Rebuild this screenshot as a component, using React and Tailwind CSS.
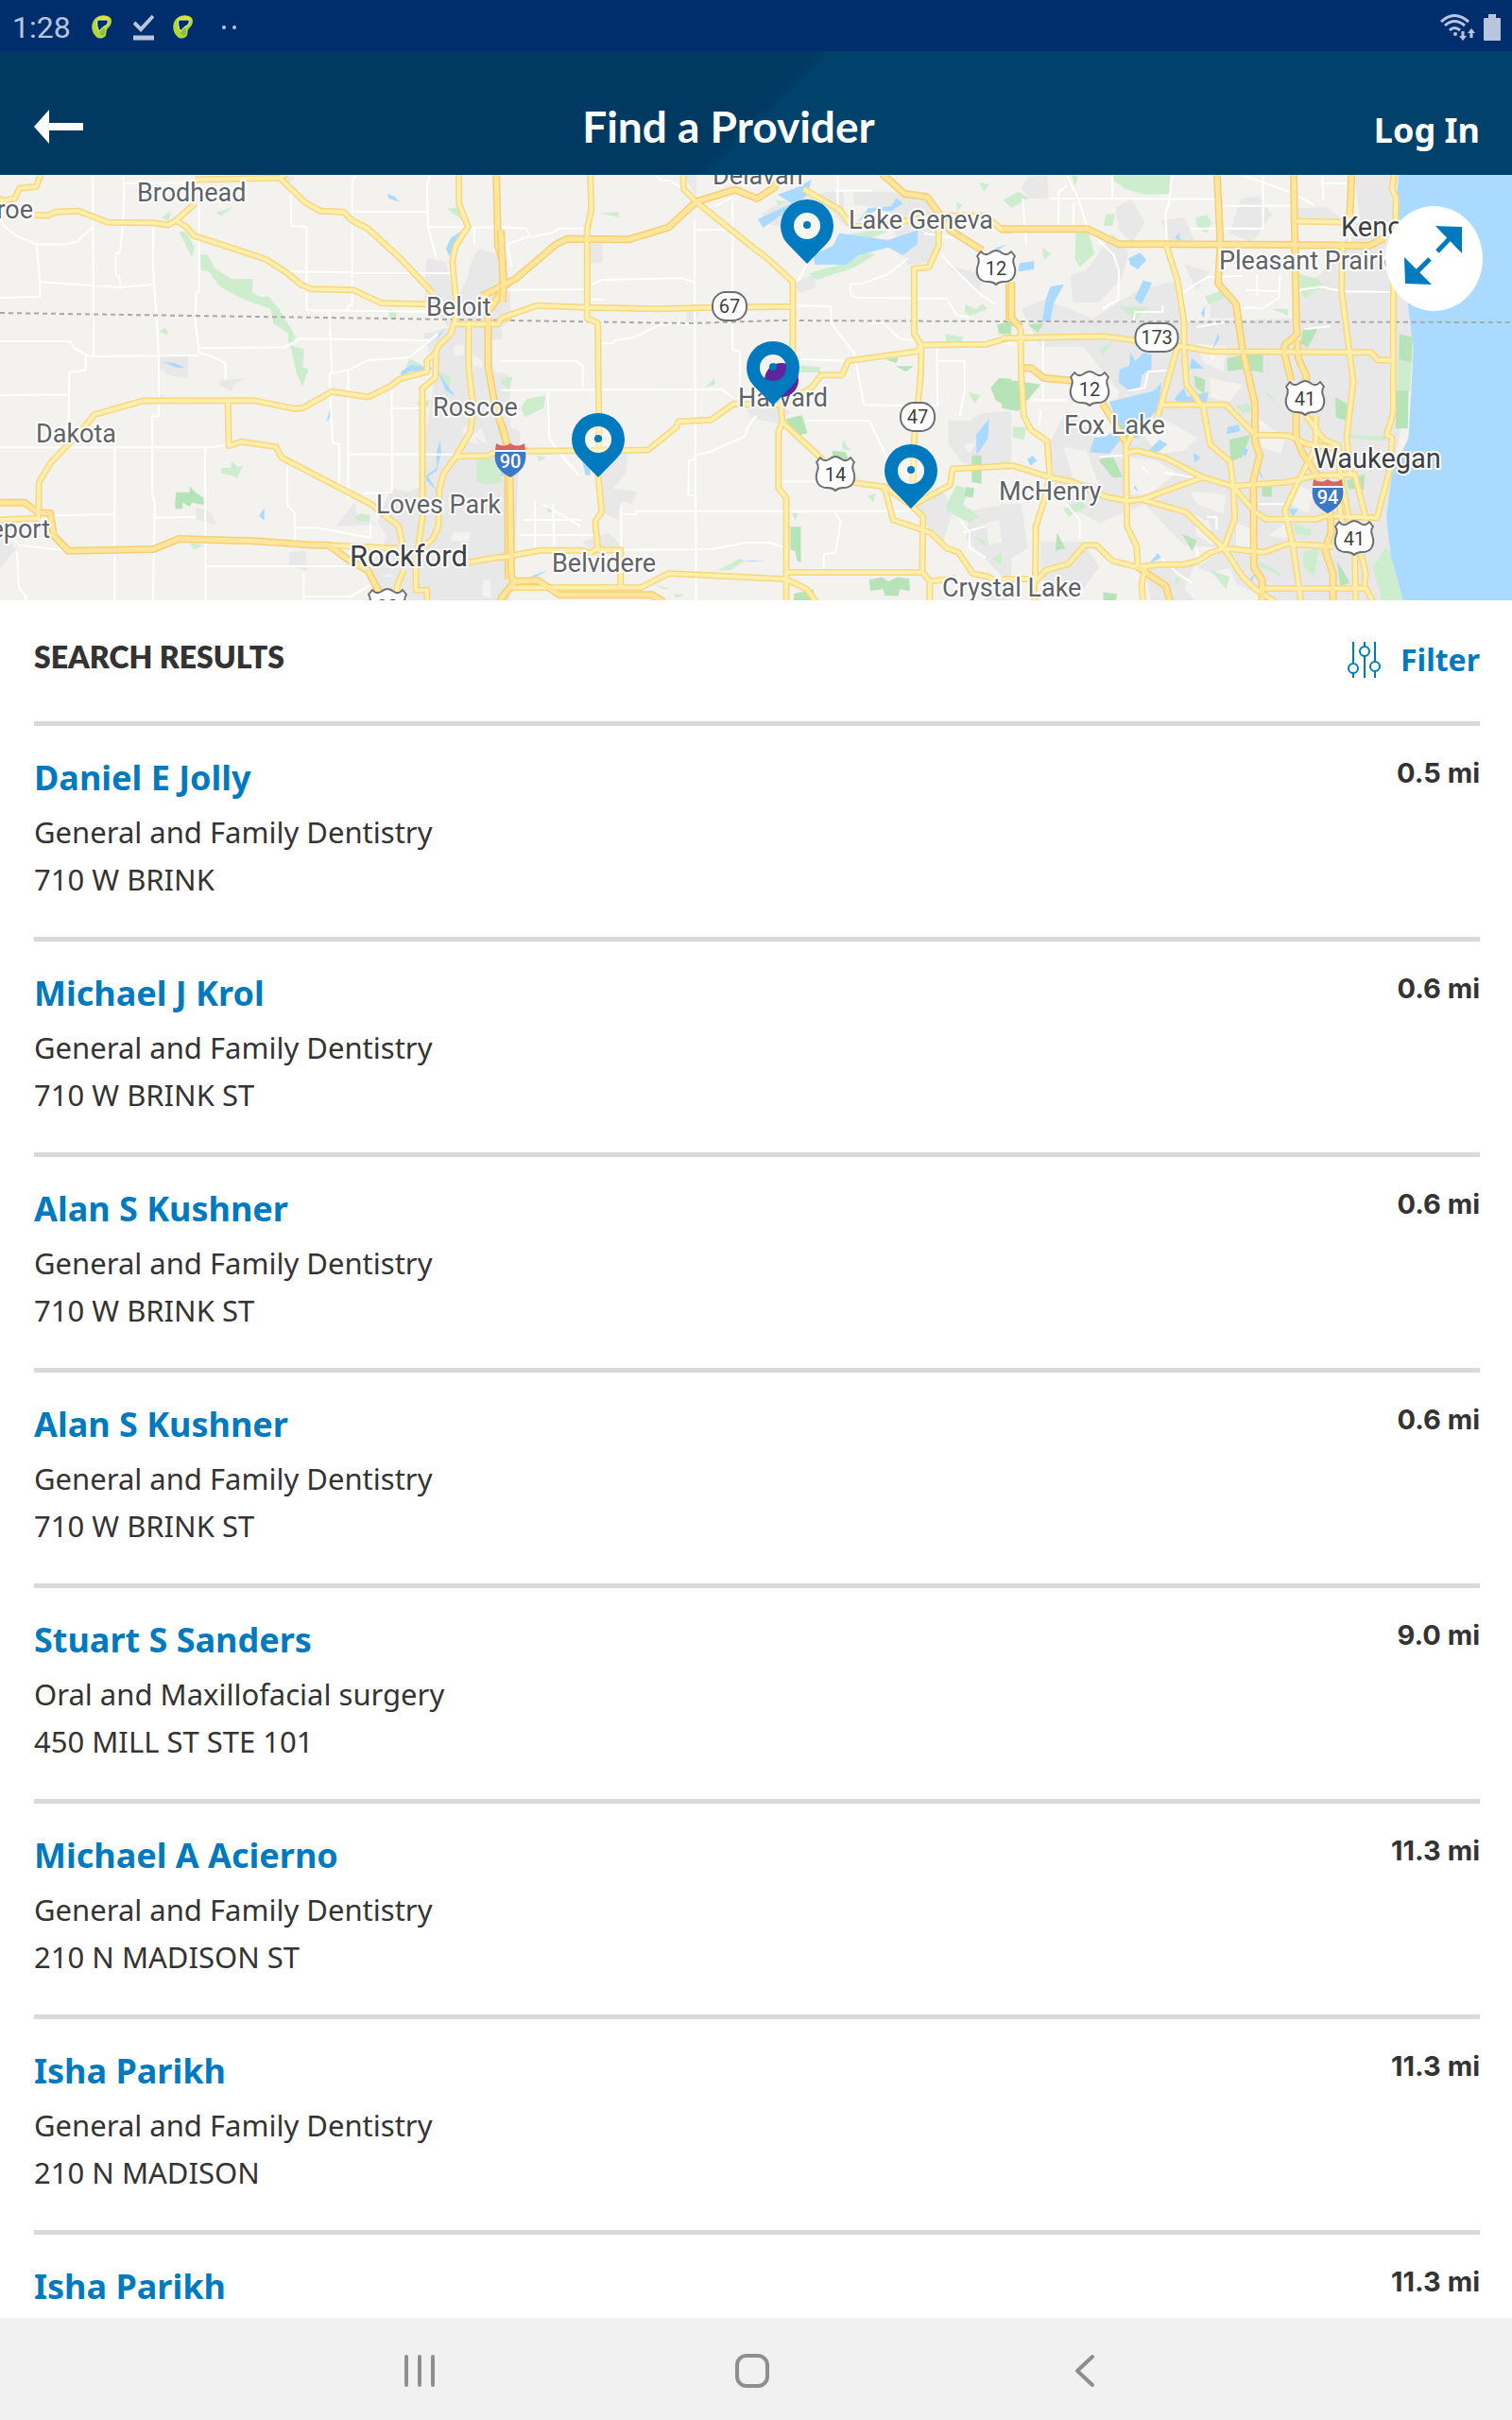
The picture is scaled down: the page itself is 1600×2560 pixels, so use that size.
import React from "react";

const providers = [
  { name: "Daniel E Jolly", specialty: "General and Family Dentistry", address: "710 W BRINK", distance: "0.5 mi" },
  { name: "Michael J Krol", specialty: "General and Family Dentistry", address: "710 W BRINK ST", distance: "0.6 mi" },
  { name: "Alan S Kushner", specialty: "General and Family Dentistry", address: "710 W BRINK ST", distance: "0.6 mi" },
  { name: "Alan S Kushner", specialty: "General and Family Dentistry", address: "710 W BRINK ST", distance: "0.6 mi" },
  { name: "Stuart S Sanders", specialty: "Oral and Maxillofacial surgery", address: "450 MILL ST STE 101", distance: "9.0 mi" },
  { name: "Michael A Acierno", specialty: "General and Family Dentistry", address: "210 N MADISON ST", distance: "11.3 mi" },
  { name: "Isha Parikh", specialty: "General and Family Dentistry", address: "210 N MADISON", distance: "11.3 mi" },
  { name: "Isha Parikh", specialty: "General and Family Dentistry", address: "210 N MADISON", distance: "11.3 mi" },
];

/* The map is drawn as three tiles, west to east, each in its own units. */
const tiles = [
  {
    transform: "translate(0 -5) scale(0.3444 0.3333)",
    urban:
      "M1310,280 L1370,290 L1400,420 L1440,330 L1440,310 L1470,250 L1540,270 L1568,350 L1568,480 L1540,500 L1568,700 L1568,1370 L1160,1370 L1140,1260 L1190,1160 L1160,1120 L1200,1010 L1260,1020 L1300,1000 L1310,820 L1340,640 L1300,520 L1380,500 L1305,410 Z M490,588 L578,588 L578,660 L530,655 L490,630 Z M675,668 L755,660 L720,680 L712,700 L675,685 Z M600,1070 L640,1080 L668,1125 L605,1110 Z M888,1212 L940,1208 L945,1272 L888,1255 Z M0,1110 L55,1100 L20,1170 L50,1200 L0,1265 Z M850,20 L905,20 L880,50 Z M1030,1130 L1090,1055 L1100,1100 L1160,1125 Z M480,712 L508,712 L505,724 L485,722 Z",
    patch:
      "M1420,830 L1440,800 L1470,870 L1440,860 Z M1480,820 L1495,870 L1450,840 Z M1395,560 L1425,555 L1425,585 L1395,590 Z M1450,585 L1480,600 L1485,625 L1455,620 Z M1510,540 L1568,535 L1568,650 L1515,640 Z M1390,1150 L1445,1150 L1440,1180 L1385,1175 Z M1485,1300 L1508,1300 L1508,1360 L1480,1350 Z M1170,1290 L1205,1280 L1205,1290 Z M1405,350 L1425,355 L1410,375 Z",
    park:
      "M550,195 L570,195 L598,245 L590,278 Z M616,268 L638,268 L660,312 L712,346 L776,345 L776,388 L800,402 L825,402 L860,444 L885,488 L908,528 L900,550 L884,545 L886,518 L840,487 L832,440 L775,420 L740,405 L675,370 L645,325 L616,315 Z M892,556 L935,568 L930,625 L948,632 L930,685 L912,650 Z M497,150 L527,128 L518,162 Z M663,135 L715,118 L678,145 Z M488,512 L510,500 L517,522 Z M1195,440 L1218,445 L1218,470 L1195,468 Z M1373,122 L1408,118 L1418,155 Z M680,945 L708,945 L712,923 L730,942 L747,938 L728,978 L710,968 L680,962 Z M583,1183 L628,1190 L595,1205 Z M1090,1100 L1110,1090 L1138,1095 L1135,1115 L1095,1112 Z M1464,918 L1520,915 L1550,990 L1500,997 L1464,990 Z M1535,670 L1568,655 L1568,700 Z M1258,598 L1300,620 L1240,650 Z M1345,640 L1385,655 L1380,690 Z M1275,740 L1320,730 L1315,752 Z",
    forest: "M540,1022 L583,1022 L583,1003 L600,1022 L626,1040 L626,1063 L590,1055 L582,1068 L562,1055 L560,1075 L538,1075 Z",
    water:
      "M1190,75 L1212,83 L1228,102 L1195,90 Z M502,608 L535,612 L568,627 L540,626 Z M1232,640 L1262,618 L1330,628 L1315,640 L1262,638 L1232,655 Z M1345,638 L1398,718 L1370,700 Z M1022,735 L1012,790 L1002,800 Z M1352,858 L1356,895 L1342,955 L1315,972 L1342,1018 L1310,985 L1310,968 L1342,945 L1340,900 Z M812,1072 L812,1112 L796,1097 Z M1415,195 L1395,240 L1382,275 L1370,250 L1385,215 Z M1370,498 L1338,545 L1350,518 Z",
    local:
      "M285,10 L288,590 M378,15 L380,42 L598,40 M382,42 L378,170 L368,262 L355,265 L357,335 L367,338 L370,370 M472,170 L470,300 L488,590 L488,780 L468,782 L468,1030 L476,1055 L470,1370 M612,10 L612,385 L603,390 L600,480 L612,580 L645,588 L692,612 L694,665 M0,155 L15,180 L50,208 L112,235 L200,236 L240,225 L285,180 M112,235 L123,355 L123,402 L0,405 M123,355 L370,372 L470,363 M0,543 L218,543 L225,562 L265,587 L290,591 L610,588 M265,587 L262,635 L213,642 L210,880 M0,714 L210,712 M0,880 L640,880 L700,872 M353,880 L352,1370 M630,880 L632,1370 M165,1096 L352,1092 M470,1103 L598,1100 M40,1170 L60,1190 L210,1208 M52,1210 L58,1325 L78,1350 L78,1370 M612,565 L875,562 L920,535 L1320,540 M893,70 L895,177 L942,180 L942,445 L1400,450 M890,322 L1400,328 M1095,15 L1082,35 L1082,430 L1070,430 L1070,445 M1082,132 L1312,132 M1320,15 L1312,50 L1315,180 L1340,275 M1315,180 L1568,182 M1457,180 L1457,235 M1012,450 L1020,640 L1012,650 L1022,865 L1042,870 L1042,1010 M1020,645 L1070,635 L1130,604 L1258,594 L1345,520 M1070,640 L1070,1045 M1070,902 L1400,902 M1204,690 L1204,1020 M1204,757 L1300,755 M1110,1025 L1205,1022 M883,935 L883,1062 L905,1090 L907,1180 M907,1135 L975,1135 L1140,1167 M632,1257 L1100,1257 M933,1280 L933,1370 M933,1353 L1080,1353 L1140,1315 M1138,1120 L1138,1165",
    road:
      "M130,0 L112,52 L60,58 L45,90 L10,98 L-5,90 M105,142 L145,145 L170,133 L242,130 L332,166 L470,167 L517,174 L540,160 L600,105 M540,160 L570,178 L596,208 L815,282 L880,325 L925,363 L955,377 L1085,380 L1172,422 L1310,425 M600,30 L860,25 L880,10 M860,25 L937,102 L985,130 L1055,133 L1085,162 L1130,185 L1230,280 L1330,390 M1410,10 L1410,105 L1438,180 L1400,240 L1390,290 L1400,400 L1400,470 L1385,520 L1345,560 L1340,580 L1312,605 L1312,640 L1230,662 L1200,685 L1132,720 L1020,703 L930,755 L905,757 L780,731 L440,732 L290,776 L255,820 L155,930 L120,990 L118,1105 M1340,570 L1338,658 L1298,693 L1298,1100 L1285,1200 M1240,1270 L1220,1320 L1220,1370 M1398,488 L1530,488 L1538,475 L1570,465 M1440,488 L1440,630 L1455,760 L1445,830 L1400,910 L1365,960 L1350,1010 L1347,1130 L1330,1170 L1270,1220 M1400,908 L1500,906 L1520,895 M700,735 L703,875 L740,862 L848,878 L865,912 L1140,1060 L1225,1130 L1245,1230 M1000,1190 L1220,1200 M0,1110 L118,1105 M1440,1245 L1568,1222 M1278,1240 L1278,1333 L1312,1333 L1312,1370",
    highway:
      "M1525,10 L1530,240 L1545,290 L1545,380 L1500,450 L1500,625 L1520,740 L1560,880 L1562,1300 M1480,400 L1568,355 M0,1055 L75,1055 L115,1085 L155,1090 L165,1160 L210,1208 L472,1203 L550,1170 L780,1177 L960,1190 L1010,1190 L1075,1240 L1130,1270 L1165,1340 M1535,1370 L1570,1320",
  },
  {
    transform: "translate(530 -5) scale(0.3444 0.3333)",
    urban:
      "M260,225 L312,232 L312,295 L260,295 Z M570,445 L608,445 L600,480 L570,480 Z M755,760 L860,745 L890,770 L850,805 L770,785 Z M290,910 L390,895 L385,960 L345,1010 L420,1020 L400,1060 L370,1050 L360,1110 L300,1080 Z M900,360 L960,330 L970,370 L920,390 Z M1085,65 L1210,70 L1300,90 L1340,150 L1330,290 L1250,300 L1180,120 L1085,110 Z M1375,795 L1440,795 L1480,770 L1568,765 L1568,940 L1420,930 L1375,870 Z M1280,1060 L1360,1020 L1390,1080 L1360,1180 L1300,1120 Z M800,140 L860,100 L1050,60 L1060,180 L980,90 L860,180 L820,170 Z M0,800 L60,830 L40,1310 L0,1370 Z M250,1180 L330,1150 L375,1200 L300,1230 Z M1370,300 L1480,330 L1470,390 Z M1440,1080 L1568,1060 L1568,1370 L1480,1370 L1540,1290 L1430,1170 Z M560,15 L600,15 L600,80 Z",
    patch: "M1420,870 L1460,865 L1440,900 Z M1490,1120 L1530,1110 L1540,1180 L1500,1190 Z",
    park:
      "M308,137 L362,133 L362,150 Z M62,752 L80,725 L137,715 L132,755 L72,783 Z M0,665 L38,655 L22,695 Z M655,660 L660,680 L628,690 Z M918,620 L980,624 L982,642 L920,642 Z M110,905 L138,912 L118,925 Z M665,1270 L735,1232 L748,1240 L705,1270 Z M138,1065 L166,1078 L145,1088 Z M475,1315 L520,1330 L495,1330 Z M530,1345 L565,1348 L540,1357 Z M945,328 L1040,300 L1125,262 L1150,268 L1085,310 L970,348 Z M1060,205 L1150,190 L1190,195 L1110,225 Z M1428,425 L1458,440 L1480,425 L1497,440 L1440,462 L1425,450 Z M1365,520 L1420,530 L1418,542 L1370,545 Z M1050,855 L1075,890 L1050,885 Z M1370,1060 L1400,1000 L1440,1010 L1420,1060 L1470,1100 L1440,1120 L1370,1080 Z M1437,705 L1475,715 L1455,740 Z M1455,1165 L1490,1175 L1485,1195 Z M1400,100 L1420,110 L1402,130 Z M1470,40 L1500,45 L1485,70 Z M1510,1230 L1540,1215 L1552,1235 L1530,1250 Z M845,95 L875,100 L855,115 Z M895,1088 L915,1090 L905,1112 Z M1127,1035 L1150,1025 L1145,1055 Z",
    forest:
      "M1132,1300 L1170,1292 L1190,1305 L1220,1292 L1255,1297 L1257,1335 L1225,1330 L1222,1352 L1180,1350 L1175,1330 L1135,1335 Z M890,1132 L922,1132 L922,1245 L910,1240 L905,1210 L890,1205 Z M875,790 L925,778 L942,835 L900,845 Z M1505,690 L1530,660 L1568,662 L1568,760 L1520,730 Z M1525,490 L1568,480 L1568,520 L1530,520 Z M1018,890 L1060,895 L1068,920 L1020,915 Z M1447,905 L1477,905 L1477,995 L1447,990 Z M900,1345 L960,1330 L960,1370 L900,1370 Z M1180,600 L1222,595 L1215,612 Z M1213,622 L1268,622 L1245,640 Z M1430,1005 L1455,1010 L1450,1040 L1425,1035 Z",
    water:
      "M790,155 L895,105 L850,78 L910,55 L955,30 L940,80 L880,130 L805,183 Z M965,300 L960,270 L1020,240 L1040,200 L1190,222 L1282,190 L1280,235 L1235,270 L1190,245 L1100,270 L1060,300 Z M1095,165 L1130,120 L1200,115 L1215,88 L1235,105 L1200,130 L1150,130 Z M1500,790 L1497,850 L1462,905 L1460,840 Z M250,920 L275,935 L275,968 L260,968 Z M745,1240 L815,1238 L770,1243 Z M90,1290 L145,1270 L110,1290 Z M1515,250 L1555,235 L1530,252 Z M0,955 L20,960 L0,972 Z",
    local:
      "M595,155 L597,690 L600,1370 M712,100 L712,570 L735,575 L735,700 M0,180 L80,185 L88,210 L20,235 M88,213 L160,198 L180,185 L262,185 M600,190 L710,188 M478,15 L490,32 L520,33 L560,60 M265,370 L310,348 L555,343 L592,355 M20,235 L33,305 M0,380 L270,378 M265,410 L320,410 M0,605 L230,605 L252,622 L252,690 M0,698 L680,695 L712,722 M145,705 L148,850 L210,940 M300,550 L345,550 L348,540 L405,532 L490,490 L590,488 M785,780 L760,812 L750,845 L640,895 L598,905 L596,918 L578,922 L576,1030 L600,1035 M865,988 L970,988 M370,1065 L370,1200 M370,1092 L415,1092 L415,1082 L1280,1082 M1025,1085 L1045,1115 L1028,1215 L992,1218 L992,1275 M370,1205 L650,1203 L750,1182 L830,1183 L870,1197 M920,600 L1060,605 M940,795 L1132,795 L1192,925 M1015,485 L1085,580 L1115,745 L1280,748 M905,430 L1015,432 L1015,485 M1130,485 L1175,485 L1225,535 L1270,540 M1073,360 L1075,395 L1095,405 L1370,407 L1400,460 L1440,468 M1073,362 L1110,360 L1190,330 L1250,280 M1340,565 L1342,748 L1290,745 M1340,605 L1425,605 L1425,695 L1410,780 M1355,270 L1390,310 L1475,395 L1520,425 M1025,65 L1140,65 M1035,15 L1035,120 M105,1050 L105,1210 M70,1110 L250,1110 M130,1060 L245,1130 M160,1060 L165,1220 M60,1158 L290,1158 M1410,1110 L1440,1150 L1440,1200 L1490,1230 M1420,1150 L1490,1130 M150,855 L240,970 M910,355 L925,330 L942,295 M660,115 L712,85 M1300,200 L1390,215",
    road:
      "M560,10 L562,60 L600,100 L780,250 L825,285 L897,355 L897,600 L875,690 L860,745 M275,10 L278,125 L265,190 L265,470 L298,485 L302,895 L300,980 L310,1085 L290,1115 L298,1200 L275,1215 M0,470 L110,430 L265,436 L480,440 L650,436 L897,433 M75,892 L452,888 L540,815 L545,798 L645,793 L715,742 L860,745 L955,690 L985,650 L1048,650 L1068,605 L1280,575 L1292,555 L1490,553 L1568,530 M860,745 L865,800 L853,830 L853,1010 L877,1040 L877,1370 M865,800 L990,920 M1085,992 L1180,1005 L1262,1065 L1325,1030 L1380,1000 L1388,948 L1568,938 M1180,1010 L1205,1110 L1320,1150 L1370,1200 L1405,1212 L1450,1280 L1495,1290 L1530,1310 M1262,1065 L1297,1100 L1295,1275 L1318,1305 L1318,1370 M877,1277 L1295,1277 M1318,1305 L1400,1295 M1345,170 L1345,240 L1315,308 L1270,312 L1270,520 L1292,555 L1290,650 L1280,760 L1270,850 L1265,1060 M930,60 L1040,125 L1080,180 L1200,170 L1330,145 L1490,145 L1540,190 L1568,190 M0,1230 L120,1207 L255,1207 L280,1220 M298,1205 L368,1205 L368,1320 M35,1325 L430,1325 L515,1280 L877,1298 L940,1330 L968,1370",
    highway:
      "M0,370 L45,345 L170,235 L205,218 L392,220 L515,182 L600,100 L720,62 L788,90 L840,55 L860,15 M1170,10 L1240,75 L1310,85 L1345,135 L1380,190 L1480,255 M40,1305 L115,1303 L180,1348 L465,1348 L500,1370 M28,970 L32,1285 L40,1310 L0,1360 M0,190 L8,370 L5,420 M0,800 L20,870 M1562,360 L1562,480",
  },
  {
    transform: "translate(1060 -5) scale(0.3444 0.3333)",
    urban:
      "M560,480 L900,470 L910,370 L980,330 L1100,160 L1085,15 L1240,15 L1270,570 L1200,970 L1190,1200 L1240,1370 L840,1370 L600,1260 L690,1200 L560,1190 L440,1060 L300,1120 L180,1050 L130,900 L200,760 L330,880 L360,700 L250,560 L120,560 L60,440 L130,410 L280,470 L420,380 L540,350 Z M80,20 L140,15 L145,90 L90,90 L60,60 Z M210,330 L260,320 L340,200 L390,260 L370,340 L300,420 L220,420 Z M350,120 L400,90 L440,170 L400,230 L360,190 Z M490,160 L560,150 L600,240 L520,240 Z M735,90 L790,80 L830,140 L770,230 L700,200 Z M910,120 L1000,118 L1050,160 L910,165 Z M0,1060 L60,1060 L80,1200 L0,1250 Z M120,1180 L250,1180 L300,1260 L250,1330 L120,1300 Z M440,1270 L600,1240 L560,1330 L600,1370 L460,1370 Z M640,400 L700,390 L720,470 L640,470 Z M560,300 L640,320 L600,380 Z",
    patch:
      "M600,550 L690,560 L680,640 L620,610 Z M640,660 L740,680 L700,735 L640,720 Z M420,820 L500,790 L600,850 L560,890 L480,900 Z M390,910 L470,920 L540,960 L450,1030 L395,1030 Z M580,1020 L690,1030 L680,1090 L600,1060 Z M720,1120 L770,1140 L765,1200 L720,1190 Z M190,880 L260,890 L300,1000 L220,980 Z M790,790 L870,850 L860,900 L800,880 Z M910,1000 L960,1020 L940,1090 L890,1060 Z M590,1090 L640,1120 L650,1190 L600,1160 Z M640,1280 L700,1260 L730,1330 L650,1360 Z M150,600 L210,640 L200,650 L130,630 Z M820,1160 L870,1120 L890,1170 Z",
    park:
      "M345,15 L520,15 L515,75 L440,78 L380,60 L340,30 Z M5,95 L50,68 L85,88 L30,120 Z M228,180 L262,180 L285,265 L240,308 L225,280 Z M320,140 L348,138 L340,178 L313,175 Z M595,150 L630,142 L645,165 L630,200 L600,180 Z M125,245 L150,265 L130,285 Z M362,432 L450,435 L408,477 Z M625,400 L700,375 L680,408 L635,425 Z M915,330 L970,345 L990,365 L930,408 L915,370 Z M830,440 L880,440 L880,462 Z M215,15 L235,20 L225,50 Z M1220,560 L1262,560 L1255,700 L1215,700 Z M300,570 L345,540 L310,590 Z M1180,1195 L1220,1260 L1235,1370 L1170,1370 L1140,1260 Z M925,1210 L975,1200 L960,1290 L930,1260 Z M35,815 L75,815 L68,855 L33,850 Z M190,1075 L245,1050 L258,1070 L205,1100 Z M895,1120 L950,1140 L950,1160 L905,1155 Z M535,1290 L550,1300 L530,1318 Z M640,1270 L700,1290 L690,1330 Z M1070,840 L1180,845 L1180,860 L1075,850 Z M720,750 L750,740 L790,760 L740,770 Z M790,1240 L850,1275 L860,1290 L790,1255 Z M150,1345 L200,1300 L180,1340 Z M470,690 L490,680 L480,740 L462,735 Z M800,690 L850,740 L815,715 Z",
    forest:
      "M0,662 L120,680 L75,735 L50,765 L0,755 Z M693,597 L745,585 L803,585 L803,642 L740,632 L693,638 Z M1222,520 L1262,530 L1258,610 L1220,600 Z M1212,700 L1250,700 L1248,820 L1210,820 Z M700,855 L765,840 L740,910 L703,925 Z M298,920 L340,905 L372,975 L340,975 Z M925,505 L972,500 L940,565 L920,550 Z M590,650 L625,665 L622,710 L595,690 Z M555,1155 L600,1175 L585,1210 Z M1060,985 L1115,965 L1112,1015 L1065,1010 Z M1025,720 L1060,740 L1060,795 L1027,785 Z M0,485 L40,490 L0,520 Z M80,490 L130,485 L110,515 Z M170,1150 L195,1200 L165,1208 Z M800,1005 L830,1005 L830,1037 L800,1035 Z M312,1340 L355,1345 L350,1370 L312,1370 Z M1030,1240 L1070,1310 L1040,1320 Z",
    water:
      "M1222,0 L1213,90 L1235,300 L1250,440 L1265,570 L1250,850 L1200,960 L1182,1100 L1195,1220 L1235,1370 L1580,1370 L1580,0 Z M390,280 L425,262 L445,285 L418,315 L395,300 Z M435,350 L462,358 L430,425 L408,408 Z M55,295 L100,288 L98,315 L50,322 Z M150,370 L192,362 L160,420 L150,478 L125,480 L135,410 Z M395,580 L412,605 L435,580 L460,585 L460,630 L430,650 L425,690 L395,702 L360,675 L362,632 L392,620 Z M330,735 L470,700 L492,672 L480,760 L440,800 L420,850 L370,850 L330,900 L270,895 L285,850 L320,845 L360,815 Z M625,430 L622,470 L612,455 Z M665,518 L670,535 L648,568 Z M583,595 L600,610 L622,630 L578,630 Z M530,725 L560,690 L570,720 L635,705 L630,735 L540,735 Z M693,815 L728,808 L732,828 L692,838 Z M450,890 L485,855 L510,870 L480,895 Z M590,898 L612,912 L592,928 Z M78,918 L95,905 L108,922 L90,938 Z M880,1075 L912,1075 L895,1100 Z M450,1250 L480,1215 L490,1230 Z M410,1000 L420,1020 L405,1008 Z M735,885 L758,885 L748,910 Z M545,200 L550,228 L532,215 Z M760,1300 L778,1280 L770,1305 Z M790,945 L805,980 L795,970 Z",
    local:
      "M65,90 L75,235 M200,15 L235,90 L265,190 L345,270 L360,320 L358,410 L310,440 M522,15 L515,100 L503,140 L508,235 M150,90 L660,92 M175,190 L175,70 L200,50 M220,180 L222,100 M340,15 L340,90 M740,15 L900,75 L960,112 M803,15 L803,185 L580,185 M680,113 L900,113 M985,15 L988,90 M985,42 L1060,42 M495,430 L495,450 L410,450 L405,480 M555,390 L630,340 L740,335 M750,380 L850,385 M785,330 L785,400 M855,330 L853,405 L800,440 M740,440 L765,435 L800,440 M915,380 L980,370 L1045,385 L1200,387 M127,530 L127,730 M90,730 L200,730 M390,700 L440,690 L450,640 L520,635 M0,550 L40,550 M120,760 L115,810 M500,960 L640,985 M190,1050 L240,1110 L240,1170 M490,1230 L540,1280 L585,1310 M600,1200 L605,1240 M930,505 L1010,495 M600,498 L700,480 M640,560 L650,600 M430,940 L450,960 M1070,250 L1070,160 M630,1100 L660,1100 L660,1140 M790,1060 L870,1060 M300,910 L380,905",
    road:
      "M505,235 L540,350 L560,480 L560,560 L568,680 L620,755 L640,870 L702,925 L712,1010 L716,1105 L683,1200 M905,162 L1045,165 M0,533 L310,527 L410,540 L560,560 L640,575 L1135,578 L1155,602 L1203,604 M58,500 L60,650 L68,780 L90,825 L140,860 L148,975 M382,865 L385,1130 L415,1195 L418,1260 M148,975 L35,938 L0,938 M148,975 L220,990 L320,1037 L390,1050 L430,1045 L618,975 L500,912 L415,890 L385,897 M618,975 L710,1003 L880,990 L960,970 L1085,965 L1120,1110 M430,1045 L565,1085 L683,1200 L740,1290 L780,1330 L840,1370 M540,560 L480,780 M400,840 L380,880 M490,745 L690,745 L778,840 L880,842 L940,870 L1040,885 M710,1003 L778,1085 L812,1108 L965,1108 L1005,1095 M935,780 L990,855 L1035,875 L1040,960 L1070,1120 M960,890 L910,990 L870,1080 L895,1190 L920,1370 M683,1200 L805,1213 L880,1185 L1020,1195 M683,1200 L640,1215 L600,1242 L555,1252 L485,1252 L418,1260 L340,1240 L290,1190 L255,1190 L205,1250 L135,1270 L100,1310 L100,1370 M148,975 L130,1050 L105,1130 L103,1300 M800,1328 L1120,1328 L1140,1370 M1085,1220 L1088,1370 M1105,1220 L1118,1280 L1115,1320 M440,1260 L430,1320 L435,1370 M1205,15 L1200,60 L1212,90 L1210,170 L1203,400 L1203,770 L1183,840 L1200,850 L1190,960 L1153,1103 L1020,1097 M1048,230 L1044,380 L1080,670 L1060,850 L1070,960 M965,780 L965,890 M1030,1000 L1045,1120 M0,1298 L90,1298",
    highway:
      "M0,187 L265,187 L360,235 L505,235 L905,237 L1130,240 L1175,215 M662,15 L672,240 L665,360 L720,425 L740,570 L778,740 L778,860 L793,905 L773,985 L775,1260 L800,1300 L800,1370 M897,10 L905,490 L908,520 L870,555 L868,580 L890,670 M908,540 L912,600 L935,650 L935,680 M905,770 L905,850 L925,900 L980,985 M1075,15 L1070,140 L1065,160 M30,355 L30,470 L58,500 M60,628 L90,628 L130,660 L220,668 M310,740 L382,865 M418,1260 L505,1320 L518,1370 M1010,1085 L1012,1150 L993,1205 L1018,1280 L1018,1370",
  },
];

const placeLabels = [
  { x: 35, y: 46, text: "roe", anchor: "end" },
  { x: 145, y: 28, text: "Brodhead" },
  { x: 451, y: 149, text: "Beloit" },
  { x: 458, y: 255, text: "Roscoe" },
  { x: 38, y: 283, text: "Dakota" },
  { x: 53, y: 384, text: "eport", anchor: "end" },
  { x: 398, y: 358, text: "Loves Park" },
  { x: 754, y: 10, text: "Delavan" },
  { x: 898, y: 57, text: "Lake Geneva" },
  { x: 781, y: 245, text: "Harvard" },
  { x: 584, y: 420, text: "Belvidere" },
  { x: 997, y: 446, text: "Crystal Lake" },
  { x: 1057, y: 344, text: "McHenry" },
  { x: 1126, y: 274, text: "Fox Lake" },
  { x: 1290, y: 100, text: "Pleasant Prairie" },
];

const cityLabels = [
  { x: 370, y: 414, text: "Rockford", size: "text-[31px]" },
  { x: 1419, y: 65, text: "Kenosha", size: "text-[29px]" },
  { x: 1390, y: 310, text: "Waukegan", size: "text-[29px]" },
];

const usShields = [
  { x: 884, y: 316, n: "14" },
  { x: 1054, y: 98, n: "12" },
  { x: 1153, y: 226, n: "12" },
  { x: 1381, y: 236, n: "41" },
  { x: 1433, y: 384, n: "41" },
  { x: 410, y: 456, n: "20" },
];

const stateShields = [
  { x: 772, y: 139, w: 36, n: "67" },
  { x: 971, y: 256, w: 36, n: "47" },
  { x: 1224, y: 172, w: 45, n: "173" },
];

const interstates = [
  { x: 540, y: 302, n: "90" },
  { x: 1405, y: 340, n: "94" },
];

const pins = [
  { x: 854, y: 54 },
  { x: 633, y: 280 },
  { x: 964, y: 313 },
  { x: 818, y: 204 },
];

const ringPath = "M0,40 L-20,19.5 A28,28 0 1 1 20,19.5 Z M14,0 A14,14 0 1 0 -14,0 A14,14 0 1 0 14,0 Z";

function Stroke({ d, color, width }) {
  return (
    <path d={d} fill="none" stroke={color} strokeWidth={width} strokeLinejoin="round" vectorEffect="non-scaling-stroke" />
  );
}

function ProviderMap() {
  return (
    <svg
      viewBox="0 0 1600 450"
      preserveAspectRatio="xMidYMid slice"
      className="block h-[450px] w-full font-['Roboto',sans-serif]"
      role="img"
      aria-label="Map of providers"
    >
      <rect width="1600" height="450" fill="#f3f2ee" />
      {tiles.map((t) => (
        <g key={t.transform} transform={t.transform}>
          <path d={t.urban} fill="#e8e8e8" />
          <path d={t.patch} fill="#f3f2ee" />
          <path d={t.park} fill="#ceedce" />
          <path d={t.forest} fill="#b7e3b8" />
          <path d={t.water} fill="#aadaff" />
          <Stroke d={t.local} color="#ffffff" width="2" />
        </g>
      ))}
      <path
        d="M0,146 L270,150 L415,152 L540,154 L728,157 L826,154 L1060,155 L1600,156"
        fill="none"
        stroke="#a9a9a9"
        strokeWidth="2"
        strokeDasharray="5 4"
      />
      {tiles.map((t) => (
        <g key={t.transform} transform={t.transform}>
          <Stroke d={t.road} color="#f7d77f" width="7" />
          <Stroke d={t.highway} color="#f6cf72" width="8" />
          <Stroke d={t.road} color="#ffefad" width="4" />
          <Stroke d={t.highway} color="#ffe69c" width="5" />
        </g>
      ))}

      <g className="text-[27px]" fill="#5f6368" stroke="#ffffff" strokeWidth="4" strokeLinejoin="round" paintOrder="stroke">
        {placeLabels.map((l) => (
          <text key={l.text} x={l.x} y={l.y} textAnchor={l.anchor}>
            {l.text}
          </text>
        ))}
      </g>
      <g fill="#3c4043" stroke="#ffffff" strokeWidth="4" strokeLinejoin="round" paintOrder="stroke">
        {cityLabels.map((l) => (
          <text key={l.text} x={l.x} y={l.y} className={l.size}>
            {l.text}
          </text>
        ))}
      </g>

      <g className="text-[20px]" textAnchor="middle">
        {usShields.map((s) => (
          <g key={`${s.x}-${s.y}`} transform={`translate(${s.x} ${s.y})`}>
            <path
              d="M-16,-17 Q-12,-12 -7,-15 Q-3,-18 0,-18 Q3,-18 7,-15 Q12,-12 16,-17 L20,-12 Q17,-8 19,-3 Q22,5 18,11 Q15,15 8,15 Q3,15 0,18 Q-3,15 -8,15 Q-15,15 -18,11 Q-22,5 -19,-3 Q-17,-8 -20,-12 Z"
              fill="#ffffff"
              stroke="#6b6e72"
              strokeWidth="2"
              strokeLinejoin="round"
            />
            <text y="8" fill="#3c4043">{s.n}</text>
          </g>
        ))}
        {stateShields.map((s) => (
          <g key={s.n} transform={`translate(${s.x} ${s.y})`}>
            <rect x={-s.w / 2} y="-15" width={s.w} height="30" rx="14" fill="#ffffff" stroke="#6b6e72" strokeWidth="2" />
            <text y="7" fill="#3c4043">{s.n}</text>
          </g>
        ))}
        {interstates.map((s) => (
          <g key={s.n} transform={`translate(${s.x} ${s.y})`}>
            <path d="M-15,-18 Q-7,-13 0,-18 Q7,-13 15,-18 L16,-11 H-16 Z" fill="#d96563" />
            <path d="M-16,-10 H16 Q18,4 10,11 Q6,15 0,18 Q-6,15 -10,11 Q-18,4 -16,-10 Z" fill="#3b78c6" />
            <path d="M-16,-10 H16" stroke="#ffffff" strokeWidth="2" />
            <text y="8" fill="#ffffff" className="font-medium">{s.n}</text>
          </g>
        ))}
      </g>

      <circle cx="827" cy="217" r="18" fill="#5f259f" />
      {pins.map((p) => (
        <g key={p.x} transform={`translate(${p.x} ${p.y})`} fill="#007abf">
          {p.x !== 818 && <circle r="14" fill="#ffffff" fillOpacity="0.3" />}
          <path d={ringPath} fillRule="evenodd" />
          <circle r="4" cy="-1" />
        </g>
      ))}
    </svg>
  );
}

function RingLogo() {
  return (
    <svg viewBox="0 0 22 26" className="h-[26px] w-[22px]" aria-hidden="true">
      <path
        d="M8,1 C13,-1 21,1 21,6 C21,10 19,12 17,14 C15,16 16,19 15,21 C14,25 7,26 4,22 C0,18 -1,11 2,6 C3,4 5,2 8,1 Z M6,5 C5,9 6,14 8,17 C10,15 11,13 13,12 C16,11 18,8 17,5 Z"
        fill="#b2d936"
        fillRule="evenodd"
      />
      <path d="M9,18 C10,16 11,14 13,13 C14,15 15,19 13,21 C11,23 8,21 9,18 Z" fill="#86c440" />
      <path d="M6,3 C10,0 20,0 20,6 C19,4 16,4 12,4 C9,4 7,4 6,5 Z" fill="#e0e22c" />
      <path d="M6,5 C5,9 6,14 8,17 C10,15 11,13 13,12 C16,11 18,8 17,5 Z" fill="none" stroke="#f2f8d8" strokeWidth="1" />
    </svg>
  );
}

function StatusBar() {
  return (
    <div className="flex h-[54px] items-center justify-between bg-[#002e6d] pt-1 pr-3 pl-[13px] text-[#b9c5dd]">
      <div className="flex items-center">
        <span className="w-[84px] font-['Roboto',sans-serif] text-[32px] leading-8">1:28</span>
        <RingLogo />
        <svg viewBox="0 0 22 28" className="ml-[22px] h-7 w-[22px]" fill="none" stroke="currentColor" aria-hidden="true">
          <path d="M1,9 L8,16 L21,2" strokeWidth="4" />
          <path d="M0,25 H22" strokeWidth="5" />
        </svg>
        <span className="ml-5">
          <RingLogo />
        </span>
        <svg viewBox="0 0 16 4" className="ml-[30px] h-1 w-4" fill="currentColor" aria-hidden="true">
          <circle cx="2" cy="2" r="2" />
          <circle cx="13" cy="2" r="2" />
        </svg>
      </div>
      <div className="flex items-center gap-[9px]">
        <svg viewBox="0 0 37 28" className="h-7 w-[37px]" fill="none" stroke="currentColor" strokeWidth="3" aria-hidden="true">
          <path d="M1,8 Q15,-5 30,8" />
          <path d="M5,12 Q15,3 26,12" />
          <path d="M10,17 Q15,12 21,17" />
          <circle cx="16" cy="21" r="2" fill="currentColor" stroke="none" />
          <path d="M24,18 V25 M33,25 V18" />
          <path d="M20,23 H28 L24,28 Z M29,20 H37 L33,15 Z" fill="currentColor" stroke="none" />
        </svg>
        <svg viewBox="0 0 18 28" className="h-7 w-[18px]" fill="currentColor" aria-hidden="true">
          <path d="M5,0 H13 V4 H17 Q18,4 18,5 V27 Q18,28 17,28 H1 Q0,28 0,27 V5 Q0,4 1,4 H5 Z" />
        </svg>
      </div>
    </div>
  );
}

function Header() {
  return (
    <header className="flex h-[131px] items-center justify-between bg-[linear-gradient(135deg,#003a63_50%,#00426b_51%)] pt-7 pr-[34px] pl-9 text-white">
      <button type="button" aria-label="Back">
        <svg viewBox="0 0 52 36" className="h-9 w-[52px]" fill="currentColor" aria-hidden="true">
          <path d="M0,18 L16,0 V14 H52 V22 H16 V36 Z" />
        </svg>
      </button>
      <h1 className="font-['Lato',sans-serif] text-[46px] leading-[54px] font-bold">Find a Provider</h1>
      <button type="button" className="pt-2 text-[36px] leading-[50px] font-bold">
        Log In
      </button>
    </header>
  );
}

function ProviderRow({ provider }) {
  return (
    <li className="flex shrink-0 items-start justify-between border-t-[5px] border-[#d9dad5] pt-[30px] pb-9">
      <div className="text-[31px] leading-[50px]">
        <a href="#provider" className="mb-[7px] block text-[36px] leading-[50px] font-bold text-[#007abf]">
          {provider.name}
        </a>
        <p>{provider.specialty}</p>
        <p>{provider.address}</p>
      </div>
      <span className="font-['Inter',sans-serif] text-[29px] leading-10 font-bold">{provider.distance}</span>
    </li>
  );
}

function NavigationBar() {
  return (
    <nav className="flex h-[108px] shrink-0 items-center justify-center bg-[#f1f1f1] pt-1 pr-2 text-[#8e8e8e]">
      <button type="button" aria-label="Recent apps" className="flex w-[352px] justify-center">
        <svg viewBox="0 0 34 36" className="h-9 w-[34px]" fill="none" stroke="currentColor" strokeWidth="4" strokeLinecap="round" aria-hidden="true">
          <path d="M3,3 V33 M17,3 V33 M31,3 V33" />
        </svg>
      </button>
      <button type="button" aria-label="Home" className="flex w-[352px] justify-center">
        <svg viewBox="0 0 36 36" className="size-9" fill="none" stroke="currentColor" strokeWidth="4" aria-hidden="true">
          <rect x="2" y="2" width="32" height="32" rx="10" />
        </svg>
      </button>
      <button type="button" aria-label="Back to previous screen" className="flex w-[352px] justify-center">
        <svg viewBox="0 0 24 36" className="h-9 w-6" fill="none" stroke="currentColor" strokeWidth="4" strokeLinecap="round" strokeLinejoin="round" aria-hidden="true">
          <path d="M20,3 L4,18 L20,33" />
        </svg>
      </button>
    </nav>
  );
}

export default function App() {
  return (
    <div className="flex h-screen flex-col bg-white font-['Noto_Sans',sans-serif] text-[#333333]">
      <StatusBar />
      <Header />
      <section className="relative shrink-0">
        <ProviderMap />
        <button
          type="button"
          aria-label="Expand map"
          className="absolute top-[33px] right-[31px] flex h-[111px] w-[103px] items-center justify-center rounded-[50%] bg-white text-[#007abf]"
        >
          <svg viewBox="0 0 103 111" className="h-[111px] w-[103px]" fill="currentColor" stroke="currentColor" aria-hidden="true">
            <path d="M53,21 L81,22 V50 Z M20,54 L21,82 L49,83 Z" stroke="none" />
            <path d="M55,48 L74,28 M47,56 L28,75" strokeWidth="5" />
          </svg>
        </button>
      </section>
      <main className="flex min-h-0 flex-1 flex-col overflow-hidden pr-[34px] pl-9">
        <div className="flex h-32 shrink-0 items-center justify-between">
          <h2 className="pb-2 font-['Lato',sans-serif] text-[32px] leading-10 font-extrabold">SEARCH RESULTS</h2>
          <button type="button" className="flex items-center gap-5 pb-[2px] text-[32px] leading-10 font-bold text-[#007abf]">
            <svg viewBox="0 0 36 40" className="h-10 w-9" fill="none" stroke="currentColor" strokeWidth="2" aria-hidden="true">
              <path d="M6,1 V24 M6,34 V39 M18,1 V6 M18,16 V39 M29,1 V22 M29,32 V39" />
              <circle cx="6" cy="29" r="5" />
              <circle cx="18" cy="11" r="5" />
              <circle cx="29" cy="27" r="5" />
            </svg>
            Filter
          </button>
        </div>
        <ul className="flex flex-col">
          {providers.map((provider, i) => (
            <ProviderRow key={i} provider={provider} />
          ))}
        </ul>
      </main>
      <NavigationBar />
    </div>
  );
}
